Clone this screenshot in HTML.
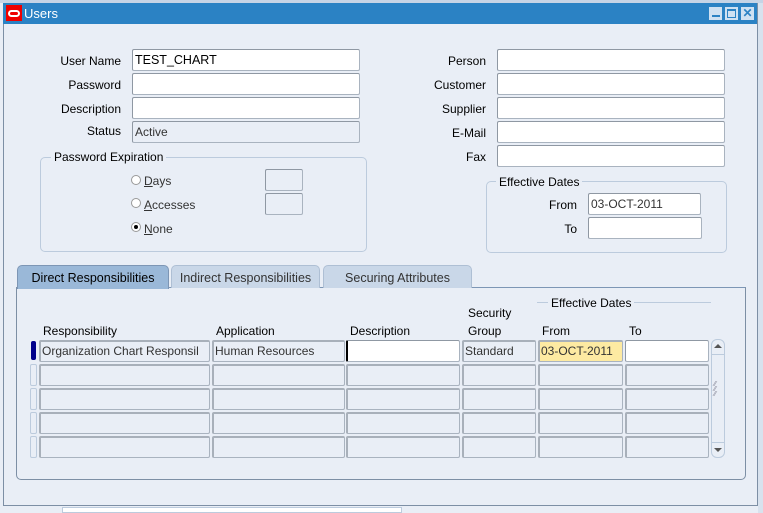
<!DOCTYPE html>
<html><head><meta charset="utf-8"><style>
*{margin:0;padding:0;box-sizing:border-box}
body{width:763px;height:513px;overflow:hidden;background:#e9eef6;font-family:"Liberation Sans",sans-serif;font-size:12px;color:#000;position:relative}
.a{position:absolute}
.lbl{position:absolute;text-align:right;width:120px;line-height:24px}
.in{position:absolute;background:#fff;border:1px solid #a9b3bf;border-top-color:#8f98a3;border-left-color:#8f98a3;border-radius:2px;height:22px;line-height:21px;padding-left:2px;white-space:nowrap;overflow:hidden}
.ro{background:#e9eef6}
.gc{position:absolute;background:#e9eef6;border:1px solid #a9b3bf;border-top:2px solid #a8b0ba;border-left:2px solid #a8b0ba;border-radius:2px;height:22px;line-height:19px;padding-left:1px;white-space:nowrap;overflow:hidden;color:#333}
.box{position:absolute;border:1px solid #bccbdd;border-radius:5px}
.leg{position:absolute;background:#e9eef6;padding:0 3px;line-height:14px}
.tab{position:absolute;top:265px;height:23px;border:1px solid #aebfd4;border-bottom:none;border-radius:5px 5px 0 0;background:#c9d7e8;color:#333;text-align:center;line-height:24px;font-size:12.5px}
.hd{position:absolute;line-height:14px}
</style></head><body>
<div class="a" style="left:0;top:0;width:763px;height:3px;background:#c6d4e6"></div>
<div class="a" style="left:3px;top:3px;width:754px;height:21px;background:#2b82c4"></div>
<div class="a" style="left:6px;top:5px;width:16px;height:16px;background:#e00"></div>
<div class="a" style="left:8px;top:10px;width:12px;height:7px;border:2px solid #fff;border-radius:4px"></div>
<div class="a" style="left:24px;top:6px;color:#fff;font-size:13px;line-height:16px">Users</div>
<div class="a" style="left:709px;top:7px;width:13px;height:13px;background:#cfe1f2"><div class="a" style="left:3px;top:8px;width:8px;height:2px;background:#2b82c4"></div></div>
<div class="a" style="left:725px;top:7px;width:13px;height:13px;background:#cfe1f2"><div class="a" style="left:2px;top:2px;width:9px;height:9px;border:1px solid #2b82c4;border-top-width:2px"></div></div>
<div class="a" style="left:741px;top:7px;width:13px;height:13px;background:#cfe1f2;color:#2b82c4;font-weight:bold;font-size:12px;line-height:13px;text-align:center">✕</div>
<div class="a" style="left:3px;top:24px;width:1px;height:482px;background:#7d8fa5"></div>
<div class="a" style="left:757px;top:3px;width:1px;height:503px;background:#7d8fa5"></div>
<div class="a" style="left:758px;top:3px;width:5px;height:510px;background:#d8e2ee"></div>
<div class="a" style="left:3px;top:505px;width:755px;height:1px;background:#7d8fa5"></div>
<div class="a" style="left:62px;top:507px;width:340px;height:6px;background:#fff;border:1px solid #bccbdd"></div>

<div class="lbl" style="left:1px;top:49px">User Name</div>
<div class="in" style="left:132px;top:49px;width:228px;font-size:12.5px">TEST_CHART</div>
<div class="lbl" style="left:1px;top:73px">Password</div>
<div class="in" style="left:132px;top:73px;width:228px"></div>
<div class="lbl" style="left:1px;top:97px">Description</div>
<div class="in" style="left:132px;top:97px;width:228px"></div>
<div class="lbl" style="left:1px;top:119px">Status</div>
<div class="in ro" style="left:132px;top:121px;width:228px;color:#333">Active</div>

<div class="box" style="left:40px;top:157px;width:327px;height:95px"></div>
<div class="leg" style="left:51px;top:150px">Password Expiration</div>
<div class="a" style="left:131px;top:175px;width:10px;height:10px;border:1px solid #999;border-radius:50%;background:#fff"></div>
<div class="a" style="left:144px;top:174px;line-height:14px;color:#333"><u>D</u>ays</div>
<div class="a" style="left:131px;top:198px;width:10px;height:10px;border:1px solid #999;border-radius:50%;background:#fff"></div>
<div class="a" style="left:144px;top:198px;line-height:14px;color:#333"><u>A</u>ccesses</div>
<div class="a" style="left:131px;top:222px;width:10px;height:10px;border:1px solid #999;border-radius:50%;background:#fff"><div class="a" style="left:2px;top:2px;width:4px;height:4px;background:#000;border-radius:50%"></div></div>
<div class="a" style="left:144px;top:222px;line-height:14px;color:#333"><u>N</u>one</div>
<div class="in ro" style="left:265px;top:169px;width:38px;height:22px"></div>
<div class="in ro" style="left:265px;top:193px;width:38px;height:22px"></div>

<div class="lbl" style="left:366px;top:49px">Person</div>
<div class="in" style="left:497px;top:49px;width:228px"></div>
<div class="lbl" style="left:366px;top:73px">Customer</div>
<div class="in" style="left:497px;top:73px;width:228px"></div>
<div class="lbl" style="left:366px;top:97px">Supplier</div>
<div class="in" style="left:497px;top:97px;width:228px"></div>
<div class="lbl" style="left:366px;top:121px">E-Mail</div>
<div class="in" style="left:497px;top:121px;width:228px"></div>
<div class="lbl" style="left:366px;top:145px">Fax</div>
<div class="in" style="left:497px;top:145px;width:228px"></div>

<div class="box" style="left:486px;top:181px;width:241px;height:72px"></div>
<div class="leg" style="left:496px;top:175px">Effective Dates</div>
<div class="lbl" style="left:457px;top:193px">From</div>
<div class="in" style="left:588px;top:193px;width:113px;color:#333">03-OCT-2011</div>
<div class="lbl" style="left:457px;top:217px">To</div>
<div class="in" style="left:588px;top:217px;width:114px"></div>

<div class="a" style="left:16px;top:287px;width:730px;height:193px;border:1px solid #7d8fa5;border-radius:0 0 5px 5px;border-top-color:#7d96b5"></div>
<div class="tab" style="left:17px;width:152px;background:#9ab8d8;border-color:#7d96b5;color:#000;height:24px">Direct Responsibilities</div>
<div class="tab" style="left:171px;width:149px">Indirect Responsibilities</div>
<div class="tab" style="left:323px;width:149px">Securing Attributes</div>

<div class="hd" style="left:43px;top:324px">Responsibility</div>
<div class="hd" style="left:216px;top:324px">Application</div>
<div class="hd" style="left:350px;top:324px">Description</div>
<div class="hd" style="left:468px;top:306px">Security</div>
<div class="hd" style="left:468px;top:324px">Group</div>
<div class="a" style="left:537px;top:302px;width:174px;height:1px;background:#bccbdd"></div>
<div class="leg" style="left:548px;top:296px">Effective Dates</div>
<div class="hd" style="left:542px;top:324px">From</div>
<div class="hd" style="left:629px;top:324px">To</div>

<div class="a" style="left:31px;top:341px;width:5px;height:19px;background:#00008b;border-radius:2px"></div>
<div class="gc" style="left:39px;top:340px;width:171px">Organization Chart Responsil</div>
<div class="gc" style="left:212px;top:340px;width:133px">Human Resources</div>
<div class="in" style="left:346px;top:340px;width:114px;border-left:2px solid #000"></div>
<div class="gc" style="left:462px;top:340px;width:74px">Standard</div>
<div class="gc" style="left:538px;top:340px;width:85px;background:#fdeaa2;color:#333">03-OCT-2011</div>
<div class="in" style="left:625px;top:340px;width:84px"></div>

<div class="a" style="left:30px;top:364px;width:7px;height:22px;border:1px solid #bccbdd;border-radius:2px"></div>
<div class="gc" style="left:39px;top:364px;width:171px"></div><div class="gc" style="left:212px;top:364px;width:133px"></div><div class="gc" style="left:346px;top:364px;width:114px"></div><div class="gc" style="left:462px;top:364px;width:74px"></div><div class="gc" style="left:538px;top:364px;width:85px"></div><div class="gc" style="left:625px;top:364px;width:84px"></div>
<div class="a" style="left:30px;top:388px;width:7px;height:22px;border:1px solid #bccbdd;border-radius:2px"></div>
<div class="gc" style="left:39px;top:388px;width:171px"></div><div class="gc" style="left:212px;top:388px;width:133px"></div><div class="gc" style="left:346px;top:388px;width:114px"></div><div class="gc" style="left:462px;top:388px;width:74px"></div><div class="gc" style="left:538px;top:388px;width:85px"></div><div class="gc" style="left:625px;top:388px;width:84px"></div>
<div class="a" style="left:30px;top:412px;width:7px;height:22px;border:1px solid #bccbdd;border-radius:2px"></div>
<div class="gc" style="left:39px;top:412px;width:171px"></div><div class="gc" style="left:212px;top:412px;width:133px"></div><div class="gc" style="left:346px;top:412px;width:114px"></div><div class="gc" style="left:462px;top:412px;width:74px"></div><div class="gc" style="left:538px;top:412px;width:85px"></div><div class="gc" style="left:625px;top:412px;width:84px"></div>
<div class="a" style="left:30px;top:436px;width:7px;height:22px;border:1px solid #bccbdd;border-radius:2px"></div>
<div class="gc" style="left:39px;top:436px;width:171px"></div><div class="gc" style="left:212px;top:436px;width:133px"></div><div class="gc" style="left:346px;top:436px;width:114px"></div><div class="gc" style="left:462px;top:436px;width:74px"></div><div class="gc" style="left:538px;top:436px;width:85px"></div><div class="gc" style="left:625px;top:436px;width:84px"></div>

<div class="a" style="left:711px;top:339px;width:14px;height:119px;border:1px solid #bccbdd;border-radius:6px"></div>
<div class="a" style="left:712px;top:354px;width:12px;height:1px;background:#bccbdd"></div>
<div class="a" style="left:712px;top:442px;width:12px;height:1px;background:#bccbdd"></div>
<div class="a" style="left:714px;top:344px;width:0;height:0;border-left:4px solid transparent;border-right:4px solid transparent;border-bottom:4px solid #555"></div>
<div class="a" style="left:714px;top:448px;width:0;height:0;border-left:4px solid transparent;border-right:4px solid transparent;border-top:4px solid #555"></div>
<div class="a" style="left:714px;top:382px;font-size:7px;line-height:5px;color:#889">⁄⁄<br>⁄⁄<br>⁄⁄</div>
</body></html>
